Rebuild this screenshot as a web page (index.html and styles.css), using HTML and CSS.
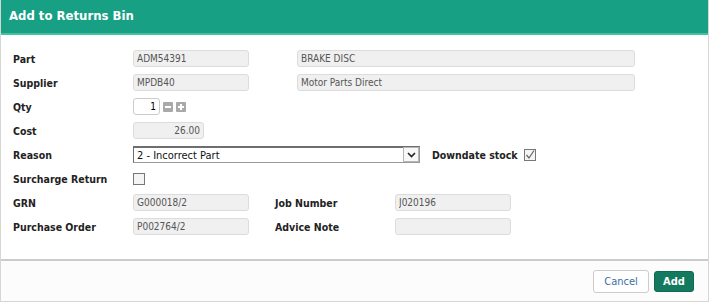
FILE: index.html
```html
<!DOCTYPE html>
<html lang="en">
<head>
  <meta charset="UTF-8" />
  <title>Add to Returns Bin</title>
  <link rel="stylesheet" href="styles.css">
</head>
<body>
  <div class="dialog">
    <div class="dialog-header">Add to Returns Bin</div>
    <div class="dialog-body">
      <div class="row">
        <label class="lbl">Part</label>
        <input class="field w-code" type="text" value="ADM54391" disabled />
        <input class="field w-desc" type="text" value="BRAKE DISC" disabled />
      </div>
      <div class="row">
        <label class="lbl">Supplier</label>
        <input class="field w-code" type="text" value="MPDB40" disabled />
        <input class="field w-desc" type="text" value="Motor Parts Direct" disabled />
      </div>
      <div class="row">
        <label class="lbl">Qty</label>
        <input class="field qty" type="text" value="1" />
        <span class="spin">
          <svg width="10" height="10" viewBox="0 0 10 10"><rect width="10" height="10" rx="1" fill="#a9a9a9"/><rect x="2" y="4" width="6" height="2" fill="#fff"/></svg>
          <svg width="10" height="10" viewBox="0 0 10 10"><rect width="10" height="10" rx="1" fill="#a9a9a9"/><rect x="2" y="4" width="6" height="2" fill="#fff"/><rect x="4" y="2" width="2" height="6" fill="#fff"/></svg>
        </span>
      </div>
      <div class="row">
        <label class="lbl">Cost</label>
        <input class="field cost" type="text" value="26.00" disabled />
      </div>
      <div class="row">
        <label class="lbl">Reason</label>
        <div class="select">
          <span class="select-text">2 - Incorrect Part</span>
          <span class="select-arrow">
            <svg width="9" height="6" viewBox="0 0 9 6"><path d="M1 1 L4.5 4.5 L8 1" fill="none" stroke="#222" stroke-width="1.6"/></svg>
          </span>
        </div>
        <label class="lbl lbl-inline">Downdate stock</label>
        <span class="check">
          <svg width="10" height="10" viewBox="0 0 10 10"><path d="M1.5 5 L4 8 L9 0.5" fill="none" stroke="#666" stroke-width="1.2"/></svg>
        </span>
      </div>
      <div class="row">
        <label class="lbl">Surcharge Return</label>
        <span class="check"></span>
      </div>
      <div class="row">
        <label class="lbl">GRN</label>
        <input class="field w-code" type="text" value="G000018/2" disabled />
        <label class="lbl lbl-right">Job Number</label>
        <input class="field w-code" type="text" value="J020196" disabled />
      </div>
      <div class="row">
        <label class="lbl">Purchase Order</label>
        <input class="field w-code" type="text" value="P002764/2" disabled />
        <label class="lbl lbl-right">Advice Note</label>
        <input class="field w-code" type="text" value="" disabled />
      </div>
    </div>
    <div class="dialog-footer">
      <button class="btn btn-cancel" type="button">Cancel</button>
      <button class="btn btn-add" type="button">Add</button>
    </div>
  </div>
</body>
</html>
```

FILE: styles.css
```css
body { margin: 0; background: #fff; font-family: "DejaVu Sans Condensed", "DejaVu Sans", sans-serif; font-size: 10px; color: #222; }
.dialog { width: 707px; border: 1px solid #d6d6d6; border-top: 0; }
.dialog-header { height: 33px; background: #17a084; border-bottom: 2px solid #44c0a2; color: #fff; font-weight: bold; font-size: 13px; line-height: 32px; padding-left: 8px; }
.dialog-body { padding: 15px 12px 24px; display: flex; flex-direction: column; gap: 7px; }
.row { display: flex; align-items: center; height: 17px; }
.lbl { width: 120px; font-weight: bold; color: #222; font-size: 10.5px; flex: none; }
.lbl-right { width: 120px; margin-left: 26px; }
.lbl-inline { width: auto; margin-left: 12px; margin-right: 6px; }
.field { box-sizing: border-box; height: 17px; border: 1px solid #dcdcdc; border-radius: 3px; background: #f0f0f0; color: #555; font-family: inherit; font-size: 10px; padding: 0 3px; margin: 0; }
.w-code { width: 116px; }
.w-desc { width: 338px; margin-left: 48px; }
.qty { width: 27px; background: #fff; color: #000; text-align: right; border-color: #ccc; }
.cost { width: 71px; text-align: right; }
.spin { display: flex; gap: 3px; margin-left: 3px; }
.spin svg { display: block; }
.select { box-sizing: border-box; width: 287px; height: 17px; display: flex; align-items: center; border: 1px solid #9a9a9a; border-top: 2px solid #6e6e6e; border-left-color: #6e6e6e; background: #fff; }
.select-text { flex: 1; padding-left: 3px; font-size: 11px; color: #111; }
.select-arrow { box-sizing: border-box; width: 16px; height: 15px; margin-top: -1px; border: 1px solid #b5b5b5; background: #f8f8f8; display: flex; align-items: center; justify-content: center; }
.check { box-sizing: border-box; width: 12px; height: 12px; border: 1px solid #777; background: #f4f4f4; display: flex; align-items: center; justify-content: center; }
.dialog-footer { border-top: 2px solid #cbcbcb; background: #fcfcfc; height: 40px; display: flex; align-items: center; justify-content: flex-end; padding-right: 14px; gap: 5px; }
.btn { font-family: inherit; font-size: 11px; border-radius: 3px; cursor: pointer; }
.btn-cancel { width: 56px; height: 23px; background: #fff; border: 1px solid #ccc; color: #3a6ea5; }
.btn-add { width: 40px; height: 21px; background: #137a5f; border: 1px solid #0f6a52; color: #fff; font-weight: bold; }
```
